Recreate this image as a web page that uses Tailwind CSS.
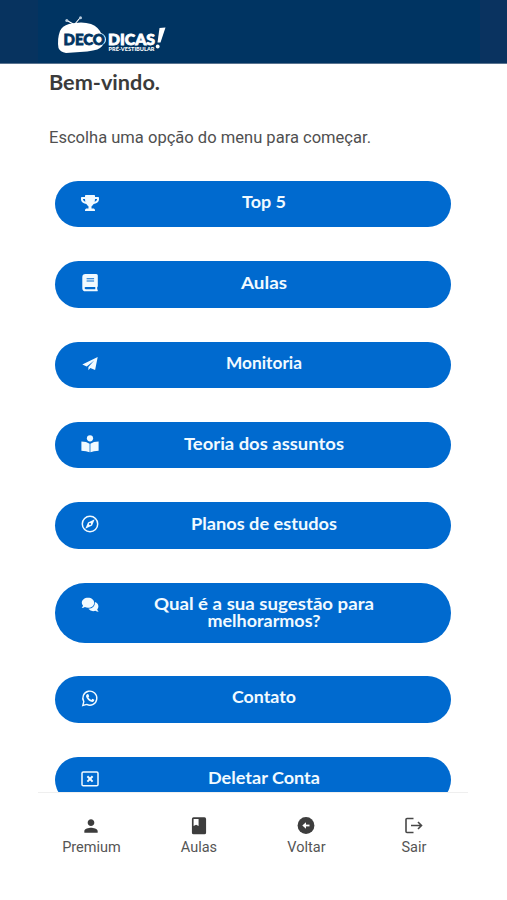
<!DOCTYPE html>
<html lang="pt-BR">
<head>
<meta charset="utf-8">
<title>Deco Dicas</title>
<script src="https://cdn.jsdelivr.net/npm/@tailwindcss/browser@4"></script>
</head>
<body class="bg-white">
<div class="flex h-[900px] w-[507px] flex-col overflow-hidden bg-white font-['Roboto',sans-serif]">
  <header class="flex h-[64px] shrink-0 border-b border-[#59738f] bg-[#003462]">
    <div class="w-[38px] bg-[#07335f]"></div>
    <div class="flex-1 pl-[18px] pt-[14px]">
      <svg class="block" width="114" height="42" viewBox="56 14 114 42" role="img" aria-label="Deco Dicas">
        <path d="M75 25L67 20.5M74 25L80 18" stroke="#fff" stroke-width="1.1" fill="none"/>
        <circle cx="66.8" cy="20.6" r="1.5" fill="#b9cbdc"/><circle cx="80.5" cy="17.8" r="1.5" fill="#b9cbdc"/>
        <path d="M69 24Q82 21 91 24Q99 27 102 35Q106 44 100 48Q96 51 80 52L66 53Q60 52 58.5 48Q57 39 60 31Q62 26 69 24Z" fill="#fff"/>
        <circle cx="99.7" cy="39.4" r="6.3" fill="#fff"/>
        <text x="63.5" y="45" font-family="Lato, sans-serif" font-size="15.6" font-weight="900" fill="#003462" stroke="#003462" stroke-width=".8" textLength="41.5" lengthAdjust="spacingAndGlyphs">DECO</text>
        <text x="108" y="45" font-family="Lato, sans-serif" font-size="15.6" font-weight="900" fill="#fff" stroke="#fff" stroke-width=".8" textLength="47" lengthAdjust="spacingAndGlyphs">DICAS</text>
        <text x="108.5" y="50.5" font-family="Lato, sans-serif" font-size="4.6" font-weight="900" fill="#fff" textLength="46" lengthAdjust="spacingAndGlyphs">PRÉ-VESTIBULAR</text>
        <path d="M159.5 28L165.5 27.5L160.5 42.5L157.5 42.5Z" fill="#fff"/><circle cx="157.7" cy="46.5" r="1.9" fill="#fff"/>
      </svg>
    </div>
    <div class="w-[27px] bg-[#0a3360]"></div>
  </header>

  <main class="flex h-[728px] shrink-0 flex-col overflow-hidden pr-[56px] pl-[49px]">
    <h1 class="mt-[5px] h-[28px] font-['Lato',sans-serif] text-[20.6px] leading-[28px] font-bold whitespace-nowrap text-[#3b3b3b]"><svg class="block" width="116" height="28"><text x="0" y="20.5" fill="currentColor" textLength="111" lengthAdjust="spacingAndGlyphs">Bem-vindo.</text></svg></h1>
    <p class="mt-[28px] h-[24px] text-[16.4px] leading-[24px] text-[#505050]"><svg class="block" width="330" height="24"><text x="0" y="17.6" fill="currentColor" textLength="322" lengthAdjust="spacingAndGlyphs">Escolha uma opção do menu para começar.</text></svg></p>

    <nav class="mt-[32px] ml-[5.5px] flex flex-col gap-[33.85px] font-['Lato',sans-serif] text-[17.2px] leading-[16.5px] font-bold text-[#f1faff]">
      <a class="flex h-[46.4px] shrink-0 rounded-[30px] bg-[#006acf] pt-[13px] pl-[26px]">
        <svg class="h-[18px] w-[18px]" viewBox="0 0 576 512" fill="currentColor"><path d="M552 64H448V24c0-13-11-24-24-24H152c-13 0-24 11-24 24v40H24C11 64 0 75 0 88v56c0 36 22 72 62 100 32 23 70 37 110 42 31 52 68 74 68 74v72h-48c-35 0-64 21-64 56v12c0 7 5 12 12 12h296c7 0 12-5 12-12v-12c0-35-29-56-64-56h-48v-72s37-22 68-74c40-5 78-19 110-42 39-28 62-64 62-100V88c0-13-11-24-24-24zM99 192c-25-18-35-38-35-48v-16h64c1 33 6 62 13 87-15-5-29-13-42-23zm413-48c0 16-17 36-35 48-13 10-27 18-42 23 7-25 12-54 13-87h64v16z"/></svg>
        <svg class="-mt-[2px] ml-[46px] h-[22px] w-[240px] overflow-visible"><text x="119" y="16.4" text-anchor="middle" fill="currentColor" textLength="44" lengthAdjust="spacingAndGlyphs">Top 5</text></svg>
      </a>
      <a class="flex h-[46.5px] shrink-0 rounded-[30px] bg-[#006acf] pt-[13px] pl-[26px]">
        <svg class="h-[18px] w-[18px]" viewBox="0 0 18 18" fill="currentColor"><path fill-rule="evenodd" d="M4.5 0H15.3Q16.8 0 16.8 1.5V12Q16.8 12.8 16.2 13.2V15.2Q16.8 15.5 16.8 16.4T15.8 17.3H4.5Q1.3 17.3 1.3 14.2V3.2Q1.3 0 4.5 0ZM5.6 4.3V5.3H13.1V4.3ZM5.6 6.5V7.5H13.1V6.5ZM4.7 13Q3.6 13 3.6 14.1T4.7 15.2H14.3V13Z"/></svg>
        <svg class="-mt-[2px] ml-[46px] h-[22px] w-[240px] overflow-visible"><text x="119" y="16.5" text-anchor="middle" fill="currentColor" textLength="46" lengthAdjust="spacingAndGlyphs">Aulas</text></svg>
      </a>
      <a class="flex h-[46.5px] shrink-0 rounded-[30px] bg-[#006acf] pt-[13px] pl-[26px]">
        <svg class="h-[18px] w-[18px]" viewBox="0 0 18 18" fill="currentColor"><path d="M1.3 9.4L16.7 1.9L14.1 15.1L9.3 13L7.4 15.2V12L13.2 5.6L5.7 11.4Z"/></svg>
        <svg class="-mt-[2px] ml-[46px] h-[22px] w-[240px] overflow-visible"><text x="119" y="16.4" text-anchor="middle" fill="currentColor" textLength="76" lengthAdjust="spacingAndGlyphs">Monitoria</text></svg>
      </a>
      <a class="flex h-[46.5px] shrink-0 rounded-[30px] bg-[#006acf] pt-[13px] pl-[26px]">
        <svg class="h-[18px] w-[18px]" viewBox="0 0 18 18" fill="currentColor"><circle cx="9" cy="3.3" r="3.1"/><path d="M.4 6.6Q5.5 6.6 8.6 8.8V17.3Q5.5 15.8.4 15.7ZM17.6 6.6Q12.5 6.6 9.4 8.8V17.3Q12.5 15.8 17.6 15.7Z"/></svg>
        <svg class="-mt-[2px] ml-[46px] h-[22px] w-[240px] overflow-visible"><text x="119" y="16.5" text-anchor="middle" fill="currentColor" textLength="160" lengthAdjust="spacingAndGlyphs">Teoria dos assuntos</text></svg>
      </a>
      <a class="flex h-[46.5px] shrink-0 rounded-[30px] bg-[#006acf] pt-[13px] pl-[26px]">
        <svg class="h-[18px] w-[18px]" viewBox="0 0 18 18" fill="currentColor"><circle cx="9" cy="9" r="7.7" fill="none" stroke="currentColor" stroke-width="1.5"/><path fill-rule="evenodd" d="M13.7 4.3L11.1 10.5L4.3 13.7L7 7.5ZM9 7.9A1.1 1.1 0 1 0 9 10.1A1.1 1.1 0 1 0 9 7.9Z"/></svg>
        <svg class="-mt-[2px] ml-[46px] h-[22px] w-[240px] overflow-visible"><text x="119" y="16.9" text-anchor="middle" fill="currentColor" textLength="146" lengthAdjust="spacingAndGlyphs">Planos de estudos</text></svg>
      </a>
      <a class="flex h-[60px] shrink-0 rounded-[30px] bg-[#006acf] pt-[13px] pl-[26px]">
        <svg class="h-[18px] w-[18px]" viewBox="0 0 18 18" fill="currentColor"><path d="M7 1.7C10.5 1.7 13.2 3.8 13.2 6.7S10.5 11.8 7 11.8C5.8 11.8 4.8 11.6 3.9 11.1Q2.6 12 .7 12Q1.7 10.9 2 9.6Q.8 8.4.8 6.7C.8 3.8 3.5 1.7 7 1.7Z"/><path d="M14 6.1Q17.4 7.5 17.4 10.6Q17.4 12.3 16.2 13.5Q16.7 14.9 17.7 15.8Q15.7 15.7 14.4 14.8Q10.2 16.1 7.3 12.8Q14 12.4 14 6.1Z"/></svg>
        <svg class="-mt-[2px] ml-[46px] h-[40px] w-[240px] overflow-visible" fill="currentColor" text-anchor="middle"><text x="119" y="16.2" textLength="220" lengthAdjust="spacingAndGlyphs">Qual é a sua sugestão para</text><text x="119" y="32.7" textLength="113" lengthAdjust="spacingAndGlyphs">melhorarmos?</text></svg>
      </a>
      <a class="flex h-[46.5px] shrink-0 rounded-[30px] bg-[#006acf] pt-[13px] pl-[26px]">
        <svg class="h-[18px] w-[18px]" viewBox="0 0 18 18" fill="currentColor"><path d="M2.8 12.7A7 7 0 1 1 5.7 15.4L1.8 16.5Z" fill="none" stroke="currentColor" stroke-width="1.4"/><path d="M6.3 5.1L7.4 5.2L8.2 7.3L7.4 8.4Q8.5 10.2 10.4 10.9L11.3 9.8L13.4 10.8Q13.3 13.1 11.2 12.9Q6.2 12 5 7.2Q5 5.9 6.3 5.1Z"/></svg>
        <svg class="-mt-[2px] ml-[46px] h-[22px] w-[240px] overflow-visible"><text x="119" y="16.4" text-anchor="middle" fill="currentColor" textLength="64" lengthAdjust="spacingAndGlyphs">Contato</text></svg>
      </a>
      <a class="flex h-[46.5px] shrink-0 rounded-[30px] bg-[#006acf] pt-[13px] pl-[26px]">
        <svg class="h-[18px] w-[18px]" viewBox="0 0 18 18" fill="none" stroke="currentColor"><rect x="1" y="2" width="16" height="13.8" rx="1.3" stroke-width="1.5"/><path d="M6.4 6.2L11.6 11.6M11.6 6.2L6.4 11.6" stroke-width="2"/></svg>
        <svg class="-mt-[2px] ml-[46px] h-[22px] w-[240px] overflow-visible"><text x="119" y="16.3" text-anchor="middle" fill="currentColor" textLength="112" lengthAdjust="spacingAndGlyphs">Deletar Conta</text></svg>
      </a>
    </nav>
  </main>

  <footer class="mr-[39px] ml-[37.7px] flex h-[108px] shrink-0 border-t border-[#efefef] bg-white pt-[22.5px] text-[14.5px] leading-[18px] text-[#555]">
    <a class="flex w-[107.5px] shrink-0 flex-col items-center"><svg class="h-[20px] w-[20px]" viewBox="0 0 24 24" fill="#3d3d3d"><path d="M12 12c2.2 0 4-1.8 4-4s-1.8-4-4-4-4 1.8-4 4 1.8 4 4 4zm0 2c-2.7 0-8 1.3-8 4v2h16v-2c0-2.7-5.3-4-8-4z"/></svg><span class="mt-[3px]">Premium</span></a>
    <a class="flex w-[107.5px] shrink-0 flex-col items-center"><svg class="h-[20px] w-[20px]" viewBox="0 0 24 24" fill="#3d3d3d"><path fill-rule="evenodd" d="M5.5 1.5H18.5Q20.5 1.5 20.5 3.5V20Q20.5 22 18.5 22H5.5Q3.5 22 3.5 20V3.5Q3.5 1.5 5.5 1.5ZM5.5 3.5V12L8.5 10.5L11.5 12V3.5Z"/></svg><span class="mt-[3px]">Aulas</span></a>
    <a class="flex w-[107.5px] shrink-0 flex-col items-center"><svg class="h-[20px] w-[20px]" viewBox="0 0 20 20"><circle cx="10" cy="9.5" r="8.4" fill="#3d3d3d"/><path d="M13.5 9.5H8" stroke="#fff" stroke-width="1.8"/><path d="M6.3 9.5L10 6.2V12.8Z" fill="#fff"/></svg><span class="mt-[3px]">Voltar</span></a>
    <a class="flex w-[107.5px] shrink-0 flex-col items-center"><svg class="h-[20px] w-[20px]" viewBox="0 0 20 20" fill="none" stroke="#484848" stroke-width="1.6"><path d="M9.5 2.5H3Q2 2.5 2 3.5V15.5Q2 16.5 3 16.5H9.5M7 9.5H17.5M14 6L17.5 9.5L14 13"/></svg><span class="mt-[3px]">Sair</span></a>
  </footer>
</div>
</body>
</html>
